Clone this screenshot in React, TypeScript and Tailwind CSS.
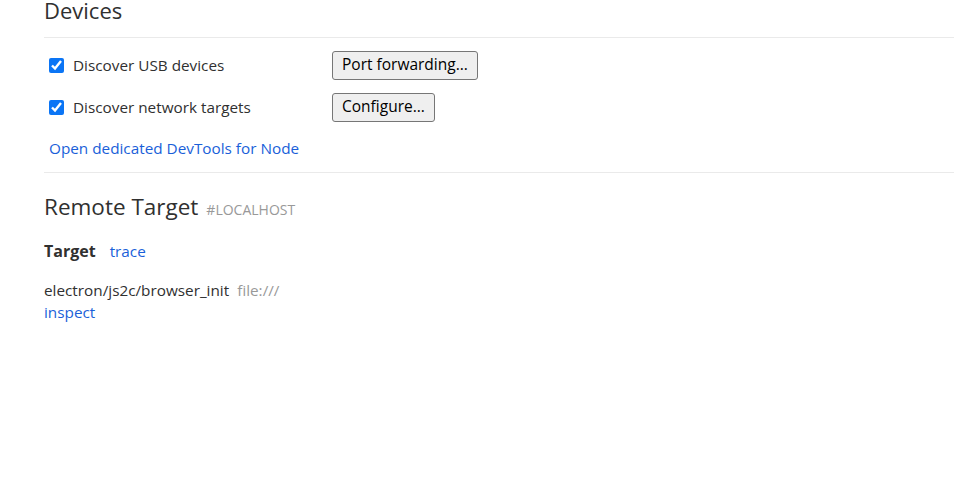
import React from 'react';

const font = { fontFamily: '"Open Sans", "Noto Sans", Arial, sans-serif' };

const DeviceOption: React.FC<{ label: string; button: string }> = ({ label, button }) => (
  <div className="flex items-center h-[42px]">
    <label className="flex items-center w-[288px] pl-[5px]">
      <input type="checkbox" defaultChecked className="w-[15px] h-[15px] m-0 accent-[#0b75f5]" />
      <span className="ml-[9px] text-[15.3px] text-[#303030]">{label}</span>
    </label>
    <button className="h-[29px] px-[9px] bg-[#efefef] border border-[#767676] rounded-[3px] text-[15.5px] text-black">
      {button}
    </button>
  </div>
);

export default function App() {
  return (
    <div className="w-[954px] h-[502px] bg-white overflow-hidden pl-[44px]" style={font}>
      <h1 className="text-[22px] leading-[24px] -mt-[2px] text-[#303030]">Devices</h1>
      <div className="mt-[15px] border-t border-[#eaeaea]" />

      <div className="pt-[6px]">
        <DeviceOption label="Discover USB devices" button="Port forwarding..." />
        <DeviceOption label="Discover network targets" button="Configure..." />
        <div className="pl-[5px] pt-[8px] pb-[12px]">
          <a className="text-[15.3px] text-[#1a5fd9] cursor-pointer">Open dedicated DevTools for Node</a>
        </div>
      </div>

      <div className="border-t border-[#eaeaea]" />

      <div className="pt-[17px] flex items-baseline">
        <h2 className="text-[22.5px] text-[#303030]">Remote Target</h2>
        <span className="ml-[8px] text-[14px] text-[#999]">#LOCALHOST</span>
      </div>

      <div className="mt-[15px] flex items-baseline">
        <span className="font-bold text-[16px] text-[#303030]">Target</span>
        <a className="ml-[14px] text-[15.3px] text-[#1a5fd9] cursor-pointer">trace</a>
      </div>

      <div className="mt-[16px] leading-[22px]">
        <div className="flex items-baseline">
          <span className="text-[15.3px] text-[#303030]">electron/js2c/browser_init</span>
          <span className="ml-[8px] text-[15.3px] text-[#999]">file:///</span>
        </div>
        <a className="block text-[15.3px] text-[#1a5fd9] cursor-pointer">inspect</a>
      </div>
    </div>
  );
}
